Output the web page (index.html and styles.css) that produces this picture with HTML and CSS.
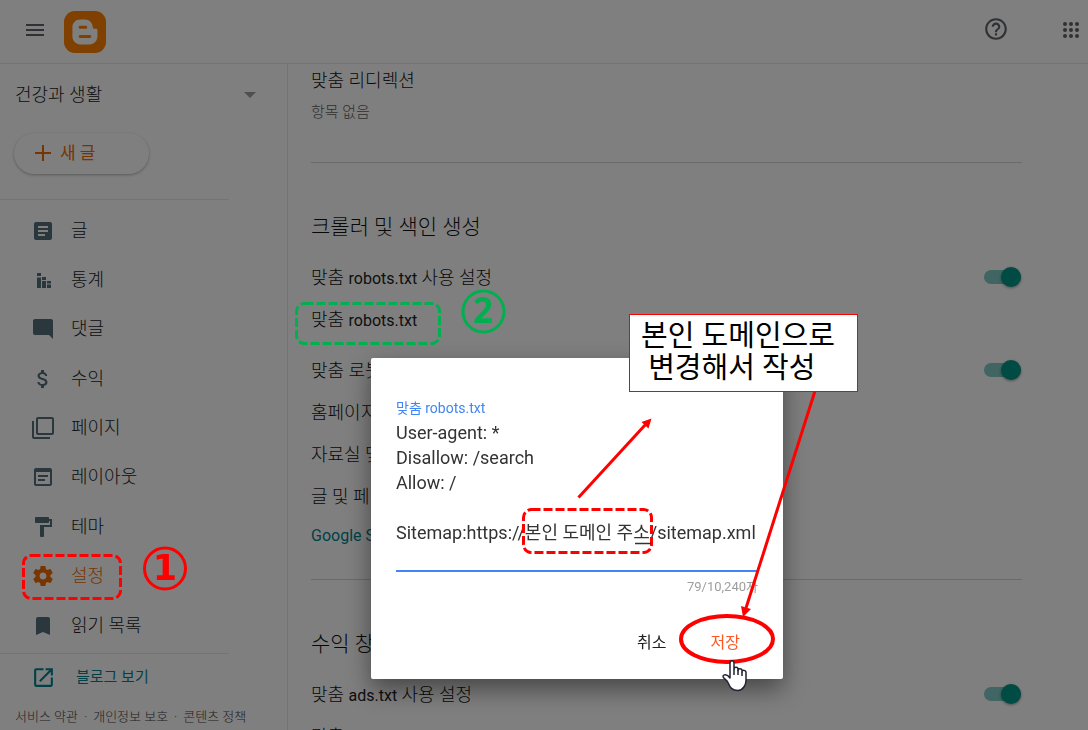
FILE: index.html
```
<!DOCTYPE html>
<html lang="ko">
<head>
	<meta charset="utf-8" />
	<title>Blogger 설정</title>
	<link rel="stylesheet" href="styles.css">
</head>
<body>
	<header class="topbar">
		<button class="icon-button" aria-label="메뉴">
			<svg width="24" height="24" viewBox="0 0 24 24"><path d="M3 18h18v-2H3v2zm0-5h18v-2H3v2zm0-7v2h18V6H3z"/></svg>
		</button>
		<a class="logo" href="#" aria-label="Blogger">
			<svg width="42" height="42" viewBox="0 0 42 42">
				<rect width="42" height="42" rx="11" fill="#ff8000"/>
				<path transform="translate(2.200 2.200) scale(1.560)" fill="#fff" fill-rule="evenodd" d="M12 3.975H9c-2.775 0-5.025 2.250-5.025 5.025v6c0 2.774 2.250 5.024 5.025 5.024h6c2.774 0 5.024-2.250 5.024-5.024v-3.975c0-.6-.45-1.050-1.050-1.050H18c-.524 0-.976-.45-.976-.976 0-2.776-2.250-5.026-5.025-5.026zm3.074 12H9c-.525 0-.975-.45-.975-.975s.45-.976.975-.976h6.074c.526 0 .977.45.977.976s-.45.976-.975.976zm-2.550-7.950c.527 0 .976.45.976.975s-.45.975-.975.975h-3.600c-.525 0-.976-.45-.976-.975s.45-.975.975-.975h3.600z"/>
			</svg>
		</a>
		<button class="icon-button help" aria-label="도움말">
			<svg width="26" height="26" viewBox="0 0 24 24"><path d="M11 18h2v-2h-2v2zm1-16C6.480 2 2 6.480 2 12s4.480 10 10 10 10-4.480 10-10S17.520 2 12 2zm0 18c-4.410 0-8-3.590-8-8s3.590-8 8-8 8 3.590 8 8-3.590 8-8 8zm0-14c-2.210 0-4 1.790-4 4h2c0-1.100.9-2 2-2s2 .9 2 2c0 2-3 1.750-3 5h2c0-2.250 3-2.500 3-5 0-2.210-1.790-4-4-4z"/></svg>
		</button>
		<button class="icon-button" aria-label="Google 앱">
			<svg width="24" height="24" viewBox="0 0 24 24"><circle cx="6" cy="6" r="2"/><circle cx="12" cy="6" r="2"/><circle cx="18" cy="6" r="2"/><circle cx="6" cy="12" r="2"/><circle cx="12" cy="12" r="2"/><circle cx="18" cy="12" r="2"/><circle cx="6" cy="18" r="2"/><circle cx="12" cy="18" r="2"/><circle cx="18" cy="18" r="2"/></svg>
		</button>
	</header>

	<div class="page">
		<aside class="sidebar">
			<label class="blog-picker">
				<select aria-label="블로그 선택"><option>건강과 생활</option></select>
				<svg width="12" height="6" viewBox="0 0 12 6"><path d="M0 0h12L6 6z"/></svg>
			</label>
			<button class="new-post">
				<svg width="16" height="16" viewBox="0 0 16 16"><path d="M7 0h2v7h7v2H9v7H7V9H0V7h7z"/></svg>
				<span>새 글</span>
			</button>
			<hr>
			<nav class="menu">
				<a href="#"><svg viewBox="0 0 24 24"><path d="M19 3H5c-1.100 0-2 .9-2 2v14c0 1.100.9 2 2 2h14c1.100 0 2-.9 2-2V5c0-1.100-.9-2-2-2zm-5 14H7v-2h7v2zm3-4H7v-2h10v2zm0-4H7V7h10v2z"/></svg>글</a>
				<a href="#"><svg viewBox="0 0 24 24"><path d="M6 5h4v3H6zM6 9.500h4V20H6zM11 9h4v3h-4zM11 13h4v7h-4zM16 13h4v2.500h-4zM16 16.500h4V20h-4z"/></svg>통계</a>
				<a href="#"><svg viewBox="0 0 24 24"><path d="M21.990 4c0-1.100-.89-2-1.990-2H4c-1.100 0-2 .9-2 2v12c0 1.100.9 2 2 2h14l4 4-.01-18z"/></svg>댓글</a>
				<a href="#"><svg viewBox="0 0 24 24"><path d="M11.800 10.900c-2.270-.59-3-1.200-3-2.150 0-1.090 1.010-1.850 2.700-1.850 1.780 0 2.440.85 2.500 2.100h2.210c-.07-1.720-1.120-3.300-3.210-3.810V3h-3v2.160c-1.940.42-3.500 1.680-3.500 3.610 0 2.310 1.910 3.460 4.700 4.130 2.500.6 3 1.480 3 2.410 0 .69-.49 1.790-2.700 1.790-2.060 0-2.870-.92-2.980-2.100h-2.200c.12 2.190 1.760 3.420 3.680 3.830V21h3v-2.150c1.950-.37 3.500-1.500 3.500-3.550 0-2.840-2.430-3.810-4.700-4.400z"/></svg>수익</a>
				<a href="#"><svg viewBox="0 0 24 24"><path d="M3 5H1v16c0 1.100.9 2 2 2h16v-2H3V5zm18-4H7c-1.100 0-2 .9-2 2v14c0 1.100.9 2 2 2h14c1.100 0 2-.9 2-2V3c0-1.100-.9-2-2-2zm0 16H7V3h14v14z"/></svg>페이지</a>
				<a href="#"><svg viewBox="0 0 24 24"><path d="M19 3H5c-1.100 0-2 .9-2 2v14c0 1.100.9 2 2 2h14c1.100 0 2-.9 2-2V5c0-1.100-.9-2-2-2zm0 16H5V7h14v12zM7 10h10v2H7zM7 14h7v2H7z"/></svg>레이아웃</a>
				<a href="#"><svg viewBox="0 0 24 24"><path d="M18 4V3c0-.55-.45-1-1-1H5c-.55 0-1 .45-1 1v4c0 .55.45 1 1 1h12c.55 0 1-.45 1-1V6h1v4H9v11c0 .55.45 1 1 1h2c.55 0 1-.45 1-1v-9h8V4h-3z"/></svg>테마</a>
				<a href="#" class="active"><svg viewBox="0 0 24 24"><path d="M19.430 12.980c.04-.32.07-.64.07-.98s-.03-.66-.07-.98l2.110-1.650c.19-.15.24-.42.12-.64l-2-3.460c-.12-.22-.39-.3-.61-.22l-2.490 1c-.52-.4-1.080-.73-1.690-.98l-.38-2.650C14.460 2.180 14.250 2 14 2h-4c-.25 0-.46.18-.49.42l-.38 2.650c-.61.25-1.170.59-1.690.98l-2.490-1c-.23-.09-.49 0-.61.22l-2 3.460c-.13.22-.07.49.12.64l2.110 1.650c-.04.32-.07.65-.07.98s.03.66.07.98l-2.110 1.650c-.19.15-.24.42-.12.64l2 3.460c.12.22.39.3.61.22l2.490-1c.52.4 1.080.73 1.690.98l.38 2.650c.03.24.24.42.49.42h4c.25 0 .46-.18.49-.42l.38-2.650c.61-.25 1.170-.59 1.690-.98l2.490 1c.23.09.49 0 .61-.22l2-3.460c.12-.22.07-.49-.12-.64l-2.110-1.650zM12 15.500c-1.930 0-3.500-1.570-3.500-3.500s1.570-3.500 3.500-3.500 3.500 1.570 3.500 3.500-1.570 3.500-3.500 3.500z"/></svg>설정</a>
				<a href="#"><svg viewBox="0 0 24 24"><path d="M17 3H7c-1.100 0-2 .9-2 2v16l7-3 7 3V5c0-1.100-.9-2-2-2z"/></svg>읽기 목록</a>
			</nav>
			<hr>
			<a class="view-blog" href="#">
				<svg width="25" height="25" viewBox="0 0 24 24"><path d="M19 19H5V5h7V3H5c-1.110 0-2 .9-2 2v14c0 1.100.89 2 2 2h14c1.100 0 2-.9 2-2v-7h-2v7zM14 3v2h3.590l-9.830 9.830 1.410 1.410L19 6.410V10h2V3h-7z"/></svg>
				블로그 보기
			</a>
			<div class="legal">
				<a href="#">서비스 약관</a><span>·</span><a href="#">개인정보 보호</a><span>·</span><a href="#">콘텐츠 정책</a>
			</div>
		</aside>

		<main class="settings">
			<section>
				<div class="first">맞춤 리디렉션</div>
				<div class="hint">항목 없음</div>
			</section>
			<section>
				<h2>크롤러 및 색인 생성</h2>
				<label class="row"><span>맞춤 <span class="latin">robots.txt</span> 사용 설정</span><input type="checkbox" class="switch" checked></label>
				<div class="row"><span>맞춤 <span class="latin">robots.txt</span></span></div>
				<label class="row spaced"><span>맞춤 로봇 헤더 태그 사용 설정</span><input type="checkbox" class="switch" checked></label>
				<div class="row">홈페이지 태그</div>
				<div class="row">자료실 및 검색 페이지 태그</div>
				<div class="row">글 및 페이지 태그</div>
				<a class="console" href="#">Google Search Console</a>
			</section>
			<section>
				<h2>수익 창출</h2>
				<label class="row"><span>맞춤 <span class="latin">ads.txt</span> 사용 설정</span><input type="checkbox" class="switch" checked></label>
				<div class="row"><span>맞춤 <span class="latin">ads.txt</span></span></div>
			</section>
		</main>
	</div>

	<div class="scrim"></div>

	<form class="dialog" role="dialog">
		<label for="robots">맞춤 robots.txt</label>
		<textarea id="robots" rows="6" spellcheck="false">User-agent: *
Disallow: /search
Allow: /

Sitemap:https://본인 도메인 주소/sitemap.xml</textarea>
		<div class="counter">79/10,240자</div>
		<div class="actions">
			<button type="button">취소</button>
			<button type="button" class="save">저장</button>
		</div>
	</form>

	<!-- tutorial marks drawn over the page -->
	<svg class="marks" width="1088" height="730" viewBox="0 0 1088 730">
		<g class="red">
			<rect class="dash" x="23.500" y="555.500" width="97" height="43" rx="8"/>
			<rect class="dash" x="523.500" y="509.500" width="128" height="43" rx="8"/>
			<circle cx="165" cy="568.500" r="20.500"/>
			<path d="M578.500 497.500 646 424"/>
			<path d="M815 391 746 608"/>
			<ellipse class="thick" cx="727" cy="639" rx="46" ry="23"/>
		</g>
		<path fill="red" d="M651.500 418.500 648.500 428.500 641.500 422zM743 617 741 606 751 609z"/>
		<g class="green">
			<rect class="dash" x="296.500" y="303.500" width="143" height="40" rx="8"/>
			<circle cx="483.500" cy="311.500" r="20.500"/>
		</g>
		<path stroke="#333" stroke-width="1.500" d="M635 543.500h16"/>
		<text class="num one" x="165" y="580">1</text>
		<text class="num two" x="483" y="323">2</text>
		<path fill="#fff" stroke="#223" stroke-width="1.500" stroke-linejoin="round" d="M730 678v-15c0-3 4-3 4 0v6c0-2.500 4-2.500 4 0v1.500c0-2.500 4-2.500 4 0v1.500c0-2.500 4-2 4 .5v8c0 4-3 10-8 10-6 0-8-3-10-8-1-3-5-4-5-6 0-2 4-3 7 1.500z"/>
		<path stroke="#223" stroke-width="1.500" d="M734 669v6M738 670v5M742 672v4"/>
	</svg>
	<div class="callout">본인 도메인으로<br>&nbsp;변경해서 작성</div>
</body>
</html>
```
FILE: styles.css
```
* { box-sizing: border-box; }
body {
	margin: 0;
	height: 100vh;
	overflow: hidden;
	display: flex;
	flex-direction: column;
	background: #fff;
	color: #111;
	font: 18px/24px Roboto, "Noto Sans CJK KR", sans-serif;
	font-weight: 300;
}
a { color: inherit; text-decoration: none; }
button { font: inherit; border: 0; background: none; padding: 0; }
svg { display: block; flex: none; }
hr { border: 0; border-top: 1px solid #e8e8e8; margin: 0; }

.topbar {
	flex: none;
	display: flex;
	align-items: center;
	height: 64px;
	padding: 0 5px 0 23px;
	border-bottom: 1px solid #e8e8e8;
	fill: #5f6368;
}
.icon-button { padding-bottom: 4px; }
.logo { margin-left: 17px; }
.help { margin: 0 50px 0 auto; padding-bottom: 6px; }

.page { flex: 1; min-height: 0; display: flex; }
.sidebar {
	flex: none;
	width: 288px;
	border-right: 1px solid #e8e8e8;
	color: #202124;
	fill: #546e7a;
}
.sidebar hr { width: 229px; }
.blog-picker {
	display: flex;
	align-items: center;
	height: 62px;
	padding: 0 31px 0 15px;
	fill: #9e9e9e;
}
.blog-picker select {
	flex: 1;
	appearance: none;
	border: 0;
	padding: 0;
	background: none;
	color: inherit;
	font: inherit;
}
.new-post {
	display: flex;
	align-items: center;
	gap: 9px;
	width: 135px;
	height: 41px;
	margin: 7px 0 25px 14px;
	padding: 0 0 2px 21px;
	border-radius: 21px;
	box-shadow: 0 1px 3px rgba(60, 64, 67, 0.4);
	color: #ef6c00;
	fill: #ef6c00;
	font-size: 17px;
	font-weight: 400;
}
.menu {
	display: flex;
	flex-direction: column;
	justify-content: space-between;
	min-height: 420px;
	margin: 18px 0 15px;
}
.menu a {
	display: flex;
	align-items: center;
	gap: 16px;
	height: 25px;
	padding-left: 31px;
}
.menu svg { width: 24px; height: 24px; }
.menu .active { color: #ef6c00; fill: #ef6c00; }
.view-blog {
	display: flex;
	align-items: center;
	gap: 20px;
	height: 46px;
	padding-left: 31px;
	color: #00838f;
	fill: #00838f;
	font-size: 15px;
	font-weight: 400;
}
.legal {
	display: flex;
	gap: 6px;
	padding-left: 15px;
	color: #444;
	font-size: 13px;
	line-height: 34px;
	white-space: nowrap;
}

.settings { flex: 1; padding: 0 66px 0 23px; }
.settings section + section { border-top: 1px solid #d4d4d4; }
.first { line-height: 34px; }
.hint { margin-bottom: 36px; color: #616161; font-size: 15px; line-height: 28px; }
h2 { margin: 52px 0 18px; font-size: 21px; line-height: 24px; font-weight: 300; }
.row { display: flex; align-items: center; justify-content: space-between; height: 42px; }
.spaced { margin-top: 9px; }
.latin { color: #212121; font-size: 16px; font-weight: 400; }
.console { display: block; margin: 6px 0 31px; color: #00838f; font-size: 16px; font-weight: 400; }

.switch {
	appearance: none;
	display: flex;
	align-items: center;
	justify-content: flex-end;
	width: 37px;
	height: 14px;
	margin: 0 1px 2px 0;
	border-radius: 7px;
	background: #80cbc4;
}
.switch::before {
	content: "";
	width: 20px;
	height: 20px;
	border-radius: 50%;
	background: #009688;
	box-shadow: 0 1px 3px rgba(0, 0, 0, 0.4);
}

.scrim { position: fixed; inset: 0; background: rgba(0, 0, 0, 0.5); }

.dialog {
	position: absolute;
	left: 371px;
	top: 358px;
	width: 412px;
	padding: 38px 25px 24px;
	border-radius: 2px;
	background: #fff;
	box-shadow: 0 10px 24px rgba(0, 0, 0, 0.45);
	font-weight: 400;
}
.dialog label { display: block; color: #4285f4; font-size: 14px; }
.dialog textarea {
	display: block;
	width: 100%;
	padding: 0;
	border: 0;
	border-bottom: 2px solid #4285f4;
	outline: 0;
	resize: none;
	overflow: hidden;
	background: none;
	color: #333;
	font: inherit;
	line-height: 25px;
	white-space: pre;
}
.counter { color: #9e9e9e; font-size: 13px; line-height: 30px; text-align: right; }
.actions { display: flex; justify-content: flex-end; gap: 44px; padding: 29px 18px 0 0; font-size: 16px; }
.actions button { color: #212121; }
.actions .save { color: #ff5722; }

.marks { position: absolute; left: 0; top: 0; fill: none; pointer-events: none; }
.red { stroke: #f00; stroke-width: 3px; }
.green { stroke: #00b050; stroke-width: 3px; }
.thick { stroke-width: 4px; }
.dash { stroke-dasharray: 9 3; }
.num { font: bold 35px "Open Sans", sans-serif; text-anchor: middle; }
.one { fill: #f00; font-family: "DejaVu Sans", sans-serif; }
.two { fill: #00b050; }
.callout {
	position: absolute;
	left: 629px;
	top: 314px;
	padding: 5px 22px 7px 11px;
	border: 1px solid #f00;
	background: #fff;
	color: #000;
	font-size: 29px;
	line-height: 32px;
	font-weight: 400;
}
```
